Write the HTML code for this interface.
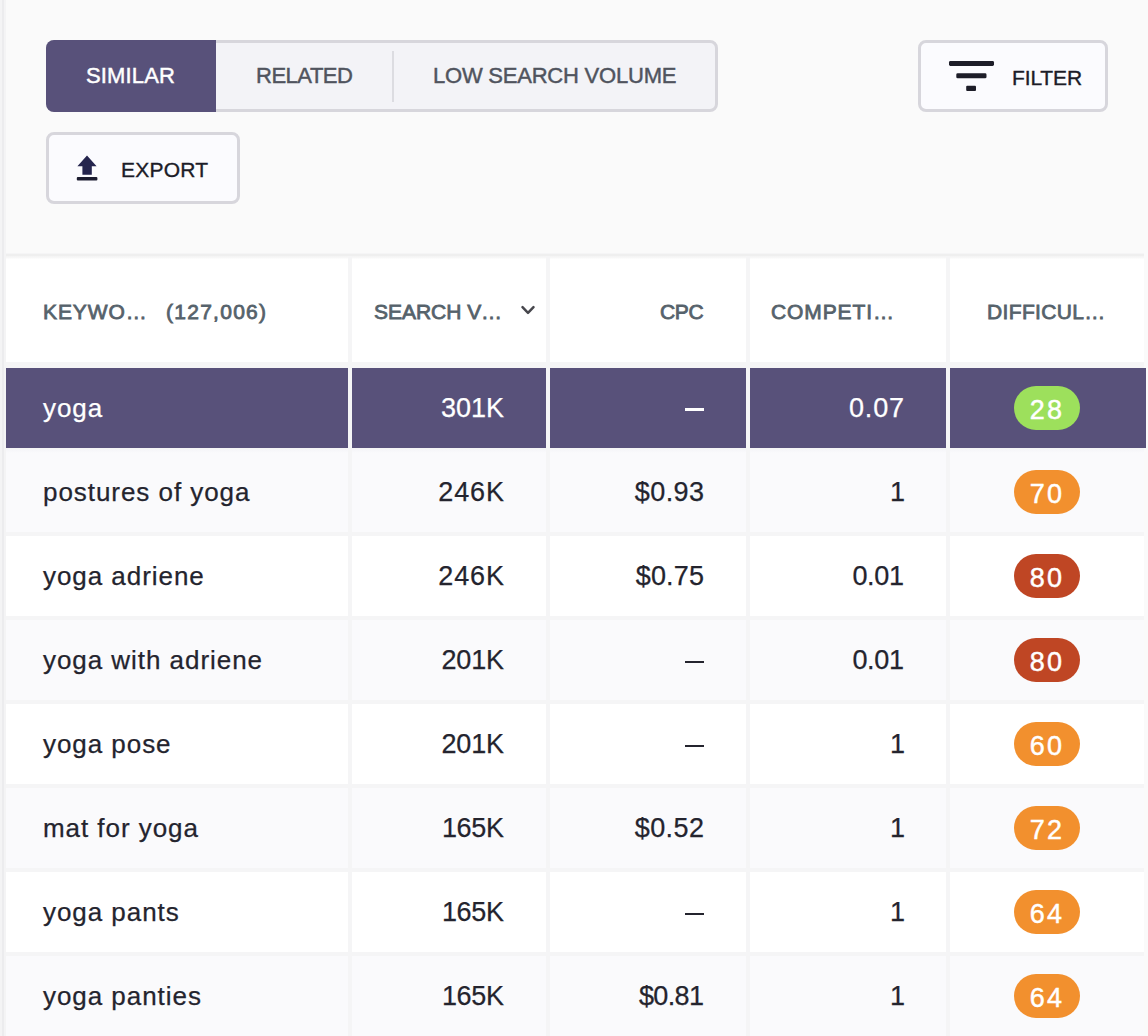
<!DOCTYPE html>
<html><head><meta charset="utf-8"><style>
*{box-sizing:border-box;margin:0;padding:0}
html,body{width:1148px;height:1036px;overflow:hidden}
body{position:relative;background:#fafafa;font-family:"Liberation Sans",sans-serif;color:#24242e}
.a{position:absolute}
.leftstrip{left:0;top:0;width:6px;height:1036px;background:#f4f4f5}
.leftline{left:2px;top:0;width:2px;height:1036px;background:#ececee}
.tabs{left:46px;top:40px;width:672px;height:72px;border:3px solid #d7d6dc;border-radius:8px;background:#f3f3f7}
.tab-active{left:46px;top:40px;width:170px;height:72px;background:#58517a;border-radius:8px 0 0 8px}
.sep{left:392px;top:51px;width:2px;height:51px;background:#dcdce1}
.tabtxt{font-size:22px;line-height:24px;top:64px;white-space:nowrap;color:#50545e;-webkit-text-stroke:0.45px currentColor}
.btn{border:3px solid #d7d6dc;border-radius:8px;background:#fbfbfe}
.btntxt{font-size:21px;line-height:24px;white-space:nowrap;color:#1c1c28;-webkit-text-stroke:0.35px currentColor}
.tbg{left:6px;top:253px;width:1138px;height:783px;background:#f5f5f6}
.c{position:absolute;background:#fff}
.hdr{position:absolute;font-size:21px;font-weight:normal;-webkit-text-stroke:0.8px currentColor;color:#56626b;white-space:nowrap;line-height:24px;top:300px}
.t{position:absolute;font-size:27px;letter-spacing:0.45px;line-height:30px;white-space:nowrap;color:#24242e;-webkit-text-stroke:0.25px currentColor}
.n{letter-spacing:0.9px;text-align:right}
.b{position:absolute;left:1014px;width:66px;height:44px;border-radius:22px;color:#fff;font-size:27px;letter-spacing:2.2px;line-height:49px;text-align:center;-webkit-text-stroke:0.45px currentColor}
.g{background:#9de05c}.o{background:#f2902e}.red{background:#bf4624}
</style></head><body>
<div class="a leftstrip"></div><div class="a leftline"></div>
<div class="a tabs"></div><div class="a tab-active"></div><div class="a sep"></div>
<div class="a tabtxt" style="left:86px;color:#fff;letter-spacing:0.149px">SIMILAR</div>
<div class="a tabtxt" style="left:256px;letter-spacing:-0.482px">RELATED</div>
<div class="a tabtxt" style="left:433px;letter-spacing:-0.22px">LOW SEARCH VOLUME</div>
<div class="a btn" style="left:918px;top:40px;width:190px;height:72px"></div>
<svg class="a" style="left:940px;top:50px" width="64" height="50" viewBox="940 50 64 50"><g fill="#1d1d28"><rect x="949" y="61" width="45" height="4.9" rx="1.4"/><rect x="956.3" y="73.3" width="30.2" height="5" rx="1.4"/><rect x="966.2" y="85.8" width="9.8" height="5.2" rx="1"/></g></svg>
<div class="a btntxt" style="left:1012px;top:66px;letter-spacing:-0.14px">FILTER</div>
<div class="a btn" style="left:46px;top:132px;width:194px;height:72px"></div>
<svg class="a" style="left:70px;top:150px" width="35" height="35" viewBox="70 150 35 35"><path fill="#25254e" d="M77.4 166.2L87 155.6L96.6 166.2H91.8V174.8H82.4V166.2Z"/><rect x="76.8" y="177" width="20.6" height="3.5" rx="1" fill="#1d1d30"/></svg>
<div class="a btntxt" style="left:121px;top:158px;letter-spacing:0.22px">EXPORT</div>
<div class="a tbg"></div><div class="a" style="left:6px;top:254px;width:1138px;height:2px;background:#efefef"></div>
<div class="c" style="left:6px;top:256px;width:342px;height:106px;background:linear-gradient(#f3f3f3,#f8f8f8 2px,#fff 3px)"></div>
<div class="c" style="left:352px;top:256px;width:194px;height:106px;background:linear-gradient(#f3f3f3,#f8f8f8 2px,#fff 3px)"></div>
<div class="c" style="left:550px;top:256px;width:196px;height:106px;background:linear-gradient(#f3f3f3,#f8f8f8 2px,#fff 3px)"></div>
<div class="c" style="left:750px;top:256px;width:196px;height:106px;background:linear-gradient(#f3f3f3,#f8f8f8 2px,#fff 3px)"></div>
<div class="c" style="left:950px;top:256px;width:194px;height:106px;background:linear-gradient(#f3f3f3,#f8f8f8 2px,#fff 3px)"></div>
<div class="hdr" style="left:43px;letter-spacing:0.9px">KEYWO…</div>
<div class="hdr" style="left:166px;letter-spacing:1.27px">(127,006)</div>
<div class="hdr" style="left:374px;letter-spacing:-0.03px">SEARCH V…</div>
<svg class="a" style="left:520px;top:304px" width="16" height="12" viewBox="0 0 16 12"><path d="M2.5 3.2l5.5 5.6 5.5-5.6" fill="none" stroke="#47474d" stroke-width="2.5" stroke-linecap="round" stroke-linejoin="round"/></svg>
<div class="hdr" style="left:660px;letter-spacing:-0.35px">CPC</div>
<div class="hdr" style="left:771px;letter-spacing:0.895px">COMPETI…</div>
<div class="hdr" style="left:987px;letter-spacing:0.35px">DIFFICUL…</div>
<div class="c" style="left:6px;top:368px;width:342px;height:80px;background:#58517a"></div>
<div class="c" style="left:352px;top:368px;width:194px;height:80px;background:#58517a"></div>
<div class="c" style="left:550px;top:368px;width:196px;height:80px;background:#58517a"></div>
<div class="c" style="left:750px;top:368px;width:196px;height:80px;background:#58517a"></div>
<div class="c" style="left:950px;top:368px;width:196px;height:80px;background:#58517a"></div>
<div class="t" style="left:43px;top:393px;color:#ffffff;font-size:26px;letter-spacing:0.95px">yoga</div>
<div class="t n" style="left:352px;width:152.0px;top:393px;color:#ffffff;letter-spacing:-0.0px">301K</div>
<div class="a" style="left:685px;top:408px;width:19px;height:3px;background:#ffffff"></div>
<div class="t n" style="left:750px;width:154.801px;top:393px;color:#ffffff;letter-spacing:0.801px">0.07</div>
<div class="b g" style="top:386px">28</div>
<div class="c" style="left:6px;top:449px;width:342px;height:83px;background:linear-gradient(#f5f5f8,#fafafc 4px)"></div>
<div class="c" style="left:352px;top:449px;width:194px;height:83px;background:linear-gradient(#f5f5f8,#fafafc 4px)"></div>
<div class="c" style="left:550px;top:449px;width:196px;height:83px;background:linear-gradient(#f5f5f8,#fafafc 4px)"></div>
<div class="c" style="left:750px;top:449px;width:196px;height:83px;background:linear-gradient(#f5f5f8,#fafafc 4px)"></div>
<div class="c" style="left:950px;top:449px;width:194px;height:83px;background:linear-gradient(#f5f5f8,#fafafc 4px)"></div>
<div class="t" style="left:43px;top:477px;color:#24242e;font-size:26px;letter-spacing:0.95px">postures of yoga</div>
<div class="t n" style="left:352px;width:152.867px;top:477px;color:#24242e;letter-spacing:0.867px">246K</div>
<div class="t n" style="left:550px;width:154.4px;top:477px;color:#24242e;letter-spacing:0.4px">$0.93</div>
<div class="t n" style="left:750px;width:155.9px;top:477px;color:#24242e;letter-spacing:0.9px">1</div>
<div class="b o" style="top:470px">70</div>
<div class="c" style="left:6px;top:536px;width:342px;height:80px;background:#ffffff"></div>
<div class="c" style="left:352px;top:536px;width:194px;height:80px;background:#ffffff"></div>
<div class="c" style="left:550px;top:536px;width:196px;height:80px;background:#ffffff"></div>
<div class="c" style="left:750px;top:536px;width:196px;height:80px;background:#ffffff"></div>
<div class="c" style="left:950px;top:536px;width:194px;height:80px;background:#ffffff"></div>
<div class="t" style="left:43px;top:561px;color:#24242e;font-size:26px;letter-spacing:0.95px">yoga adriene</div>
<div class="t n" style="left:352px;width:152.867px;top:561px;color:#24242e;letter-spacing:0.867px">246K</div>
<div class="t n" style="left:550px;width:154.175px;top:561px;color:#24242e;letter-spacing:0.175px">$0.75</div>
<div class="t n" style="left:750px;width:153.666px;top:561px;color:#24242e;letter-spacing:-0.334px">0.01</div>
<div class="b red" style="top:554px">80</div>
<div class="c" style="left:6px;top:620px;width:342px;height:80px;background:#fafafc"></div>
<div class="c" style="left:352px;top:620px;width:194px;height:80px;background:#fafafc"></div>
<div class="c" style="left:550px;top:620px;width:196px;height:80px;background:#fafafc"></div>
<div class="c" style="left:750px;top:620px;width:196px;height:80px;background:#fafafc"></div>
<div class="c" style="left:950px;top:620px;width:194px;height:80px;background:#fafafc"></div>
<div class="t" style="left:43px;top:645px;color:#24242e;font-size:26px;letter-spacing:0.95px">yoga with adriene</div>
<div class="t n" style="left:352px;width:151.801px;top:645px;color:#24242e;letter-spacing:-0.199px">201K</div>
<div class="a" style="left:685px;top:661px;width:19px;height:2px;background:#24242e"></div>
<div class="t n" style="left:750px;width:153.666px;top:645px;color:#24242e;letter-spacing:-0.334px">0.01</div>
<div class="b red" style="top:638px">80</div>
<div class="c" style="left:6px;top:704px;width:342px;height:80px;background:#ffffff"></div>
<div class="c" style="left:352px;top:704px;width:194px;height:80px;background:#ffffff"></div>
<div class="c" style="left:550px;top:704px;width:196px;height:80px;background:#ffffff"></div>
<div class="c" style="left:750px;top:704px;width:196px;height:80px;background:#ffffff"></div>
<div class="c" style="left:950px;top:704px;width:194px;height:80px;background:#ffffff"></div>
<div class="t" style="left:43px;top:729px;color:#24242e;font-size:26px;letter-spacing:0.95px">yoga pose</div>
<div class="t n" style="left:352px;width:151.801px;top:729px;color:#24242e;letter-spacing:-0.199px">201K</div>
<div class="a" style="left:685px;top:745px;width:19px;height:2px;background:#24242e"></div>
<div class="t n" style="left:750px;width:155.9px;top:729px;color:#24242e;letter-spacing:0.9px">1</div>
<div class="b o" style="top:722px">60</div>
<div class="c" style="left:6px;top:788px;width:342px;height:80px;background:#fafafc"></div>
<div class="c" style="left:352px;top:788px;width:194px;height:80px;background:#fafafc"></div>
<div class="c" style="left:550px;top:788px;width:196px;height:80px;background:#fafafc"></div>
<div class="c" style="left:750px;top:788px;width:196px;height:80px;background:#fafafc"></div>
<div class="c" style="left:950px;top:788px;width:194px;height:80px;background:#fafafc"></div>
<div class="t" style="left:43px;top:813px;color:#24242e;font-size:26px;letter-spacing:0.95px">mat for yoga</div>
<div class="t n" style="left:352px;width:151.666px;top:813px;color:#24242e;letter-spacing:-0.334px">165K</div>
<div class="t n" style="left:550px;width:154.425px;top:813px;color:#24242e;letter-spacing:0.425px">$0.52</div>
<div class="t n" style="left:750px;width:155.9px;top:813px;color:#24242e;letter-spacing:0.9px">1</div>
<div class="b o" style="top:806px">72</div>
<div class="c" style="left:6px;top:872px;width:342px;height:80px;background:#ffffff"></div>
<div class="c" style="left:352px;top:872px;width:194px;height:80px;background:#ffffff"></div>
<div class="c" style="left:550px;top:872px;width:196px;height:80px;background:#ffffff"></div>
<div class="c" style="left:750px;top:872px;width:196px;height:80px;background:#ffffff"></div>
<div class="c" style="left:950px;top:872px;width:194px;height:80px;background:#ffffff"></div>
<div class="t" style="left:43px;top:897px;color:#24242e;font-size:26px;letter-spacing:0.95px">yoga pants</div>
<div class="t n" style="left:352px;width:151.666px;top:897px;color:#24242e;letter-spacing:-0.334px">165K</div>
<div class="a" style="left:685px;top:913px;width:19px;height:2px;background:#24242e"></div>
<div class="t n" style="left:750px;width:155.9px;top:897px;color:#24242e;letter-spacing:0.9px">1</div>
<div class="b o" style="top:890px">64</div>
<div class="c" style="left:6px;top:956px;width:342px;height:80px;background:#fafafc"></div>
<div class="c" style="left:352px;top:956px;width:194px;height:80px;background:#fafafc"></div>
<div class="c" style="left:550px;top:956px;width:196px;height:80px;background:#fafafc"></div>
<div class="c" style="left:750px;top:956px;width:196px;height:80px;background:#fafafc"></div>
<div class="c" style="left:950px;top:956px;width:194px;height:80px;background:#fafafc"></div>
<div class="t" style="left:43px;top:981px;color:#24242e;font-size:26px;letter-spacing:0.95px">yoga panties</div>
<div class="t n" style="left:352px;width:151.666px;top:981px;color:#24242e;letter-spacing:-0.334px">165K</div>
<div class="t n" style="left:550px;width:153.375px;top:981px;color:#24242e;letter-spacing:-0.625px">$0.81</div>
<div class="t n" style="left:750px;width:155.9px;top:981px;color:#24242e;letter-spacing:0.9px">1</div>
<div class="b o" style="top:974px">64</div>
</body></html>
